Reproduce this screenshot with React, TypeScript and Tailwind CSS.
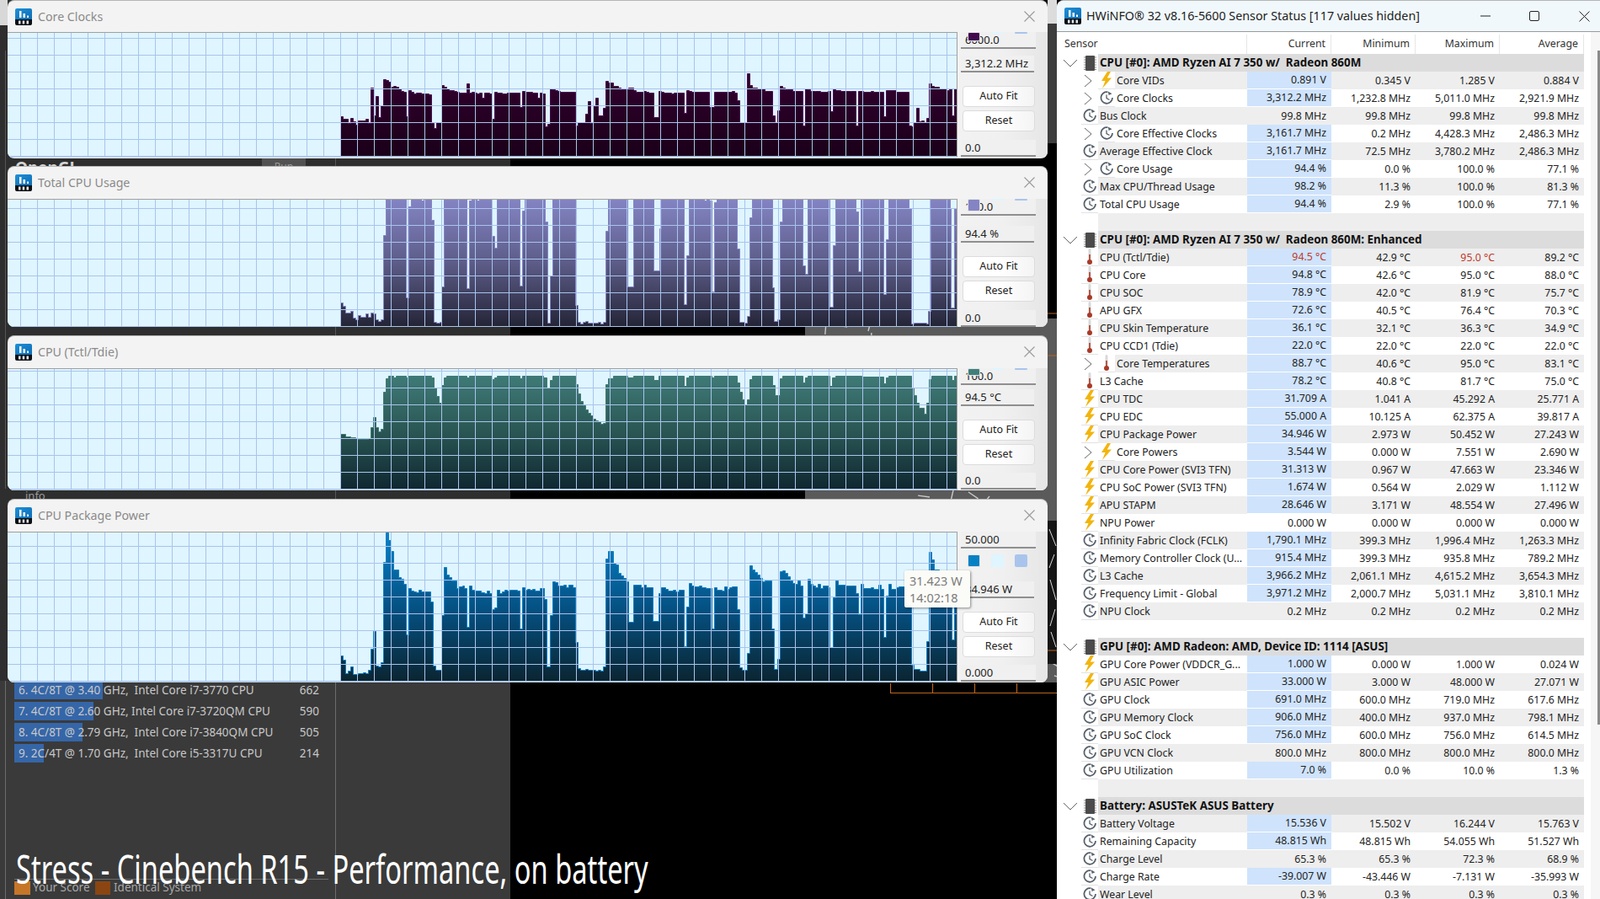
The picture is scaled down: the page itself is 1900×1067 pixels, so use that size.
const conv = (a: number[], ox: number, oy: number) => {
  const out: number[][] = [];
  for (let i = 0; i < a.length; i += 2) out.push([Math.round(ox + a[i] / 3), Math.round(oy + a[i + 1] / 3)]);
  return out;
};

const clockData = [
  ...conv([12,295,21,303,39,318,48,300,57,313,66,323,75,310,93,309,102,303,111,318,120,193,129,292,138,222,147,297,156,256,165,162,174,165,183,172,192,190,201,187,210,189,219,195,228,205,237,207,246,295,255,201,264,208,273,212,282,210,300,212,327,216,336,318,345,337,354,315,372,184,381,189,390,195,399,201,417,204,426,208,435,210,462,178,471,210,480,207,489,210,498,213,507,210,516,228,525,210,543,213,552,303,561,207,570,210,588,213,606,210,651,261,660,204,669,208,687,207,696,210,714,228,723,210,732,213,741,330,750,321,759,195,768,198,777,201,786,204,795,207,849,327,858,315,885,285,894,240,903,318,912,258,921,228,930,291,948,264,957,168,966,174,984,186,1002,192,1011,198,1038,192,1056,201,1065,207,1092,204,1101,207,1110,210,1128,297,1146,204,1155,208,1164,210,1191,213,1200,210,1236,282,1245,201,1254,204,1263,207,1326,261,1344,207,1407,204,1416,210,1425,237,1434,315], 400, 40),
  ...conv([22,262,31,304,40,312,58,316,85,323,112,412,121,436,130,392,139,306,148,313,157,318,184,323,193,325,220,447,229,316,238,318,247,325,265,323,283,326,310,324,319,396,328,319,337,320,355,323,391,325,409,447,418,325,436,326,463,324,472,327,508,413,517,322,553,327,598,447,607,450,616,436,625,385,634,432,643,429,652,436,661,420,670,298,679,305,688,310,706,315,733,320,742,316,751,410,760,316], 880, 0),
];
const usageData = [
  ...conv([12,505,21,517,30,541,48,535,57,559,66,565,75,550,84,556,102,544,111,556,120,541,129,544,138,565,147,571,156,565,165,265,174,136,246,487,255,162,264,136,300,140,309,136,336,210,345,574,354,577,366,574,372,448,381,136,462,454,471,140,480,136,498,140,507,136,552,268,561,310,570,136,651,445,660,178,669,136,741,216,750,577,759,409,768,136,849,514,858,574,867,580,876,574,885,571,894,577,930,574,939,580,948,574,957,250,966,136,1035,448,1056,136,1128,391,1149,241,1155,136,1236,511,1245,337,1254,136,1308,140,1317,136,1326,140,1335,466,1344,147,1353,136,1425,313,1434,574,1452,577,1461,553,1470,202], 400, 190),
  ...conv([39,706,110,1020,118,1140,130,1135,138,785,147,706,218,943,227,972,238,706,316,1090,328,870,337,706,408,750,417,963,426,706,506,1043,517,850,526,706,597,737,606,1150,615,1145,660,1150,667,1105,676,706,745,737,748,1092,760,737], 880, 0),
];
const tempData = [
  ...conv([12,283,30,292,48,294,66,297,75,300,111,298,120,259,129,223,138,259,147,273,156,265,165,133,174,85,183,76,201,82,210,76,246,82,255,76,336,82,345,118,354,148,363,172,372,109,381,82,390,76,462,82,471,76,552,88,561,82,570,76,651,85,660,76,735,82,747,118,759,91,768,76,849,106,858,139,867,166,876,181,885,196,894,208,903,217,912,229,921,235,930,238,939,247,948,244,957,106,966,85,984,76,1035,82,1056,76,1128,91,1147,76,1236,110,1245,82,1254,76,1335,82,1344,76,1425,100,1434,133,1443,160,1452,178,1461,160,1470,88], 400, 420),
  ...conv([39,135,112,168,121,205,139,145,148,135,220,160,229,142,238,135,316,172,325,142,337,135,430,137,508,162,517,140,526,135,607,178,616,205,625,230,634,250,652,270,661,232,670,148,679,135,751,150,760,135], 880, 400),
];
const powerData = [
  ...conv([12,1072,21,1086,30,1135,39,1126,48,1111,57,1138,75,1135,93,1132,102,1135,111,1123,120,1048,129,985,138,1108,147,1111,156,1096,165,739,174,632,183,661,192,700,201,766,219,793,228,799,237,817,246,997,255,832,264,841,273,844,282,847,291,838,300,844,333,880,342,1108,351,1123,372,928,381,757,390,784,399,793,408,805,426,832,435,826,447,823,453,832,462,970,471,823,480,838,489,841,513,847,525,850,534,841,543,850,552,907,561,901,570,838,579,850,588,844,597,838,606,841,615,838,642,841,651,975,660,829,669,838,678,835,687,838,696,835,705,841,723,832,738,870,747,1110,759,928,768,808,777,811,786,823,807,820,816,829,825,820,840,829,849,1024,858,1117,867,1123,885,1120,894,1123,921,1126,930,1123,939,1126,948,1110,957,727,966,700,984,742,993,748,1002,778,1011,787,1020,796,1029,808,1038,952,1056,820,1083,829,1092,820,1101,829,1125,948,1146,850,1155,829,1170,835,1179,841,1197,838,1206,844,1218,838,1236,1038,1245,898,1254,814,1263,823,1272,826,1290,823,1299,829,1314,832,1335,975,1344,829,1353,838,1371,841,1380,826,1389,835,1398,829,1407,826,1425,907,1434,1114,1443,1123,1461,1063], 400, 420),
  ...conv([31,811,40,826,49,835,58,844,67,856,76,868,85,865,100,865,109,1034,118,1180,130,1143,139,830,148,827,157,836,166,850,175,863,184,872,193,875,202,865,211,883,220,997,229,980,238,858,247,875,256,883,265,887,274,877,283,890,292,883,310,887,316,1102,328,925,337,865,346,878,355,880,373,883,391,881,408,910,417,985,427,877,436,890,463,887,472,893,490,880,499,893,508,1065,517,918,526,875,535,893,553,888,562,885,606,1165,616,1180,635,1185,661,1080,670,762,679,790,688,824,706,900,733,900,751,1075,760,900], 880, 400),
];

function AppIcon() {
  return (
    <svg width="20" height="20" viewBox="0 0 20 20" className="shrink-0">
      <defs>
        <linearGradient id="appblue" x1="0" y1="0" x2="1" y2="1">
          <stop offset="0" stopColor="#1e90d8" />
          <stop offset="1" stopColor="#0d6db5" />
        </linearGradient>
      </defs>
      <path d="M2 0H18A2 2 0 0 1 20 2V13H0V2A2 2 0 0 1 2 0Z" fill="url(#appblue)" />
      <path d="M0 13H20V18A2 2 0 0 1 18 20H2A2 2 0 0 1 0 18Z" fill="#0b0f14" />
      <path d="M5 3H7.5V11H5ZM9.5 6H12V11H9.5ZM14 8.5H16V11H14Z" fill="#fff" />
      <path d="M4 14.5H6.5V18.5H4ZM8.7 14.5H11.2V18.5H8.7ZM13.5 14.5H16V18.5H13.5Z" fill="#e6e6e6" />
    </svg>
  );
}

function Clock() {
  return (
    <svg width="18" height="18" viewBox="0 0 18 18" fill="none">
      <path d="M10.5 2.3A6.8 6.8 0 1 0 16 9" stroke="#56606a" strokeWidth="1.8" />
      <path d="M10.8 1.5L15.5 4.2L11.6 6Z" fill="#56606a" />
      <path d="M9 5.5V9.5L12.5 11.5" stroke="#56606a" strokeWidth="1.3" />
    </svg>
  );
}

function Bolt() {
  return (
    <svg width="14" height="20" viewBox="0 0 14 20">
      <path d="M8 0L1 11H5.5L2 20L13 7.5H7.8L12 0Z" fill="#f2b50f" />
    </svg>
  );
}

function Thermo() {
  return (
    <svg width="8" height="20" viewBox="0 0 8 20">
      <rect x="2.5" y="0" width="3" height="13" rx="1.5" fill="#d9d9d9" />
      <rect x="3.2" y="7" width="1.6" height="8" fill="#a83a28" />
      <circle cx="4" cy="16" r="3" fill="#a83a28" />
    </svg>
  );
}

function Chip() {
  return (
    <svg width="15" height="18" viewBox="0 0 15 18">
      <path d="M0 2H15M0 5H15M0 8H15M0 11H15M0 14H15M0 16.5H15" stroke="#8a8a8a" strokeWidth="1" />
      <rect x="2" y="0" width="11" height="18" rx="1" fill="#4b4b4b" />
    </svg>
  );
}

function Chevron({ down }: { down?: boolean }) {
  return down ? (
    <svg width="18" height="12" viewBox="0 0 18 12" fill="none">
      <path d="M1 2L9 10L17 2" stroke="#666" strokeWidth="1" />
    </svg>
  ) : (
    <svg width="10" height="16" viewBox="0 0 10 16" fill="none">
      <path d="M1 1L9 8L1 15" stroke="#666" strokeWidth="1" />
    </svg>
  );
}

type GraphProps = {
  height: number;
  bottomAbs: number;
  data: number[][];
  id: string;
  line: string;
  stops: string[];
};

function Graph({ height, bottomAbs, data, id, line, stops }: GraphProps) {
  const width = 1128;
  const top = bottomAbs - height;
  let d = `M${data[0][0] - 9 + 0.5} ${height}`;
  data.forEach(([x, y], i) => {
    const next = i + 1 < data.length ? data[i + 1][0] - 9 : width;
    d += `V${y - top + 0.5}H${next + 0.5}`;
  });
  d += `V${height}Z`;
  const hs: number[] = [];
  for (let y = height - 1.5; y > 1; y -= 20) hs.push(y);
  const vs: number[] = [];
  for (let x = 15.5; x < width; x += 20) vs.push(x);
  return (
    <svg width={width} height={height} viewBox={`0 0 ${width} ${height}`} className="block shrink-0">
      <defs>
        <linearGradient id={id} gradientUnits="userSpaceOnUse" x1="0" y1="0" x2="0" y2={height}>
          {stops.map((c, i) => (
            <stop key={i} offset={i / (stops.length - 1)} stopColor={c} />
          ))}
        </linearGradient>
      </defs>
      <rect width={width} height={height} fill="#dff5ff" />
      <path d={d} fill={`url(#${id})`} />
      <path d={d} fill="none" stroke={line} strokeWidth="1" />
      {hs.map((y) => (
        <path key={y} d={`M0 ${y}H${width}`} stroke="#a9c4ec" strokeWidth="1" />
      ))}
      {vs.map((x) => (
        <path key={x} d={`M${x} 0V${height}`} stroke="#a9c4ec" strokeWidth="1" />
      ))}
      <path d={`M0 0.5H${width}M${width - 0.5} 0V${height}`} stroke="#a0a0a0" strokeWidth="1" />
      <path d={`M0 ${height - 0.5}H${width}`} stroke="#bcd0e8" strokeWidth="1" />
    </svg>
  );
}

function Field({ text, className }: { text: string; className?: string }) {
  return (
    <div className={`h-[20px] border-b-2 border-[#8f8f8f] bg-[#f0f0f0] pl-[5px] pt-[2px] flex items-center text-[13px] text-[#222] font-['Open_Sans',sans-serif] ${className}`}>
      {text}
    </div>
  );
}

function PanelButton({ text }: { text: string }) {
  return (
    <div className="h-[25px] w-[86px] ml-[2px] rounded-[4px] border border-[#dcdcdc] bg-gradient-to-r from-white via-white to-[#f4f4f4] flex items-center justify-center text-[12.5px] text-[#222] font-['Open_Sans',sans-serif]">
      {text}
    </div>
  );
}

type WinProps = {
  title: string;
  topClass: string;
  heightClass: string;
  titleClass: string;
  graphH: number;
  bottomAbs: number;
  data: number[][];
  id: string;
  line: string;
  stops: string[];
  max: string;
  cur: string;
  min: string;
  fieldGap: string;
  swatchTop: string;
  swatchH: string;
  otherH: string;
  swatch: string;
};

function GraphWindow(p: WinProps) {
  return (
    <div className={`absolute left-[9px] w-[1235px] rounded-[8px] border-t border-[#b5b5b5] bg-[#f3f3f3] overflow-hidden ${p.topClass} ${p.heightClass}`}>
      <div className={`flex items-center pl-[9px] pr-[15px] ${p.titleClass}`}>
        <AppIcon />
        <span className="ml-[7px] text-[14.2px] text-[#8a8a8a] font-['Open_Sans',sans-serif]">{p.title}</span>
        <svg width="13" height="13" viewBox="0 0 13 13" className="ml-auto" fill="none">
          <path d="M0.5 0.5L12.5 12.5M12.5 0.5L0.5 12.5" stroke="#9a9a9a" strokeWidth="1.1" />
        </svg>
      </div>
      <div className="flex">
        <Graph height={p.graphH} bottomAbs={p.bottomAbs} data={p.data} id={p.id} line={p.line} stops={p.stops} />
        <div className="relative w-[107px] pl-[4px] pr-[14px] flex flex-col bg-gradient-to-r from-[#f2f2f2] via-[#f0f0f0] to-[#e6e6e6]" style={{ height: p.graphH }}>
          <Field text={p.max} className="w-[89px]" />
          <Field text={p.cur} className={`w-[87px] ${p.fieldGap}`} />
          <div className="mt-[16px] flex flex-col gap-[4px]">
            <PanelButton text="Auto Fit" />
            <PanelButton text="Reset" />
          </div>
          <Field text={p.min} className="w-[89px] mt-auto mb-[1px]" />
          <div className={`absolute left-[12px] flex gap-[13px] ${p.swatchTop}`}>
            <div className={`w-[15px] ${p.swatchH} ${p.swatch} rounded-[2px] border border-[#e4e4e4]`} />
            <div className={`w-[15px] ${p.otherH} bg-[#dff5ff] rounded-[2px]`} />
            <div className={`w-[15px] ${p.otherH} bg-[#a9c4ec] rounded-[2px]`} />
          </div>
        </div>
      </div>
    </div>
  );
}

type Row = {
  name?: string;
  kind?: "head" | "bolt" | "clock" | "temp";
  sub?: boolean;
  blue?: boolean;
  vals?: string[];
  hot?: boolean;
};

const r = (kind: Row["kind"], name: string, blue: boolean, vals: string, sub = false, hot = false): Row => ({
  kind,
  name,
  blue,
  vals: vals.split("|"),
  sub,
  hot,
});
const head = (name: string): Row => ({ kind: "head", name });

const rows: Row[] = [
  head("CPU [#0]: AMD Ryzen AI 7 350 w/  Radeon 860M"),
  r("bolt", "Core VIDs", true, "0.891 V|0.345 V|1.285 V|0.884 V", true),
  r("clock", "Core Clocks", true, "3,312.2 MHz|1,232.8 MHz|5,011.0 MHz|2,921.9 MHz", true),
  r("clock", "Bus Clock", false, "99.8 MHz|99.8 MHz|99.8 MHz|99.8 MHz"),
  r("clock", "Core Effective Clocks", true, "3,161.7 MHz|0.2 MHz|4,428.3 MHz|2,486.3 MHz", true),
  r("clock", "Average Effective Clock", true, "3,161.7 MHz|72.5 MHz|3,780.2 MHz|2,486.3 MHz"),
  r("clock", "Core Usage", true, "94.4 %|0.0 %|100.0 %|77.1 %", true),
  r("clock", "Max CPU/Thread Usage", true, "98.2 %|11.3 %|100.0 %|81.3 %"),
  r("clock", "Total CPU Usage", true, "94.4 %|2.9 %|100.0 %|77.1 %"),
  {},
  head("CPU [#0]: AMD Ryzen AI 7 350 w/  Radeon 860M: Enhanced"),
  r("temp", "CPU (Tctl/Tdie)", true, "94.5 °C|42.9 °C|95.0 °C|89.2 °C", false, true),
  r("temp", "CPU Core", true, "94.8 °C|42.6 °C|95.0 °C|88.0 °C"),
  r("temp", "CPU SOC", true, "78.9 °C|42.0 °C|81.9 °C|75.7 °C"),
  r("temp", "APU GFX", true, "72.6 °C|40.5 °C|76.4 °C|70.3 °C"),
  r("temp", "CPU Skin Temperature", true, "36.1 °C|32.1 °C|36.3 °C|34.9 °C"),
  r("temp", "CPU CCD1 (Tdie)", true, "22.0 °C|22.0 °C|22.0 °C|22.0 °C"),
  r("temp", "Core Temperatures", true, "88.7 °C|40.6 °C|95.0 °C|83.1 °C", true),
  r("temp", "L3 Cache", true, "78.2 °C|40.8 °C|81.7 °C|75.0 °C"),
  r("bolt", "CPU TDC", true, "31.709 A|1.041 A|45.292 A|25.771 A"),
  r("bolt", "CPU EDC", true, "55.000 A|10.125 A|62.375 A|39.817 A"),
  r("bolt", "CPU Package Power", true, "34.946 W|2.973 W|50.452 W|27.243 W"),
  r("bolt", "Core Powers", true, "3.544 W|0.000 W|7.551 W|2.690 W", true),
  r("bolt", "CPU Core Power (SVI3 TFN)", true, "31.313 W|0.967 W|47.663 W|23.346 W"),
  r("bolt", "CPU SoC Power (SVI3 TFN)", true, "1.674 W|0.564 W|2.029 W|1.112 W"),
  r("bolt", "APU STAPM", true, "28.646 W|3.171 W|48.554 W|27.496 W"),
  r("bolt", "NPU Power", false, "0.000 W|0.000 W|0.000 W|0.000 W"),
  r("clock", "Infinity Fabric Clock (FCLK)", true, "1,790.1 MHz|399.3 MHz|1,996.4 MHz|1,263.3 MHz"),
  r("clock", "Memory Controller Clock (U...", true, "915.4 MHz|399.3 MHz|935.8 MHz|789.2 MHz"),
  r("clock", "L3 Cache", true, "3,966.2 MHz|2,061.1 MHz|4,615.2 MHz|3,654.3 MHz"),
  r("clock", "Frequency Limit - Global", true, "3,971.2 MHz|2,000.7 MHz|5,031.1 MHz|3,810.1 MHz"),
  r("clock", "NPU Clock", false, "0.2 MHz|0.2 MHz|0.2 MHz|0.2 MHz"),
  {},
  head("GPU [#0]: AMD Radeon: AMD, Device ID: 1114 [ASUS]"),
  r("bolt", "GPU Core Power (VDDCR_G...", true, "1.000 W|0.000 W|1.000 W|0.024 W"),
  r("bolt", "GPU ASIC Power", true, "33.000 W|3.000 W|48.000 W|27.071 W"),
  r("clock", "GPU Clock", true, "691.0 MHz|600.0 MHz|719.0 MHz|617.6 MHz"),
  r("clock", "GPU Memory Clock", true, "906.0 MHz|400.0 MHz|937.0 MHz|798.1 MHz"),
  r("clock", "GPU SoC Clock", true, "756.0 MHz|600.0 MHz|756.0 MHz|614.5 MHz"),
  r("clock", "GPU VCN Clock", false, "800.0 MHz|800.0 MHz|800.0 MHz|800.0 MHz"),
  r("clock", "GPU Utilization", true, "7.0 %|0.0 %|10.0 %|1.3 %"),
  {},
  head("Battery: ASUSTeK ASUS Battery"),
  r("clock", "Battery Voltage", true, "15.536 V|15.502 V|16.244 V|15.763 V"),
  r("clock", "Remaining Capacity", true, "48.815 Wh|48.815 Wh|54.055 Wh|51.527 Wh"),
  r("clock", "Charge Level", false, "65.3 %|65.3 %|72.3 %|68.9 %"),
  r("clock", "Charge Rate", true, "-39.007 W|-43.446 W|-7.131 W|-35.993 W"),
  r("clock", "Wear Level", false, "0.3 %|0.3 %|0.3 %|0.3 %"),
];

function RowIcon({ kind }: { kind: Row["kind"] }) {
  return kind === "bolt" ? <Bolt /> : kind === "temp" ? <Thermo /> : <Clock />;
}

function SensorRow({ row, index }: { row: Row; index: number }) {
  const shade = index % 2 === 1 ? "bg-[#eeeeee]" : "bg-white";
  if (row.kind === "head") {
    return (
      <div className="flex h-[21px] items-center">
        <div className="w-[29px] pl-[7px] flex items-center"><Chevron down /></div>
        <div className="w-[20px] flex items-center justify-center"><Chip /></div>
        <div className="flex-1 h-full bg-[#dcdcdc] pl-[2px] flex items-center whitespace-pre [font-family:'DejaVu_Sans',sans-serif] font-bold text-[13.4px] text-[#111]">
          {row.name}
        </div>
      </div>
    );
  }
  if (!row.name) {
    return (
      <div className="flex h-[21px]">
        <div className="w-[49px]" />
        <div className={`flex-1 ${shade}`} />
      </div>
    );
  }
  return (
    <div className="flex h-[21px] text-[#222]">
      <div className="w-[29px]" />
      {row.sub && (
        <div className="w-[20px] flex items-center pl-[3px]"><Chevron /></div>
      )}
      <div className="w-[20px] flex items-center justify-center border-b border-[#e2e2e2]"><RowIcon kind={row.kind} /></div>
      <div className={`flex-1 min-w-0 pl-[2px] pt-[1px] flex items-center whitespace-pre ${shade}`}>{row.name}</div>
      {row.vals?.map((v, i) => (
        <div
          key={i}
          className={`w-[100px] pr-[6px] pt-[1px] flex items-center justify-end ${i === 0 && row.blue ? "bg-[#cfe3fc] border-b border-white" : shade} ${row.hot && i !== 1 && i !== 3 ? "text-[#c0392b]" : ""}`}
        >
          {v}
        </div>
      ))}
    </div>
  );
}

const cinebench = [
  { rank: "6. 4C/8T @ 3.40 GHz,  Intel Core i7-3770 CPU", score: "662", bar: "w-[105px]" },
  { rank: "7. 4C/8T @ 2.60 GHz, Intel Core i7-3720QM CPU", score: "590", bar: "w-[94px]" },
  { rank: "8. 4C/8T @ 2.79 GHz,  Intel Core i7-3840QM CPU", score: "505", bar: "w-[81px]" },
  { rank: "9. 2C/4T @ 1.70 GHz,  Intel Core i5-3317U CPU", score: "214", bar: "w-[35px]" },
];

function Texture() {
  const lines: string[] = [];
  for (let i = 0; i < 90; i++) {
    const x = (i * 37) % 300;
    const y = (i * 53) % 440;
    const a = (i * 47) % 360;
    const dx = Math.cos((a * Math.PI) / 180) * 14;
    const dy = Math.sin((a * Math.PI) / 180) * 14;
    lines.push(`M${x} ${y}l${dx.toFixed(1)} ${dy.toFixed(1)}`);
  }
  return (
    <svg width="299" height="432" viewBox="0 0 299 432" className="absolute left-[956px] top-[378px]">
      <rect width="299" height="432" fill="#5a5a5a" />
      <path d={lines.join("")} stroke="#c9c9c9" strokeWidth="1.4" fill="none" />
      <rect x="288" y="240" width="11" height="170" fill="#151515" />
      <path d="M290 250l8 20M296 280l-6 16M291 310l7 24M297 345l-6 20M292 372l6 18" stroke="#d8d8d8" strokeWidth="1" />
    </svg>
  );
}

export default function App() {
  return (
    <div className="relative w-[1900px] h-[1067px] overflow-hidden bg-black font-['Open_Sans',sans-serif]">
      {/* desktop behind the windows */}
      <div className="absolute inset-y-0 left-0 w-[606px] flex flex-col">
        <div className="h-[808px] bg-[#2e2e2e]" />
        <div className="flex-1 bg-[#3a3a3a] flex pl-[6px]">
          <div className="w-[393px] border-l border-r border-[#6c6c6c] pl-[10px] flex flex-col">
            <div className="flex flex-col gap-[3px]">
              {cinebench.map((c) => (
                <div key={c.score} className="relative h-[22px] w-[362px] flex items-center">
                  <div className={`absolute inset-y-0 left-0 bg-[#3566a8] ${c.bar}`} />
                  <span className="relative ml-[5px] text-[13.5px] whitespace-pre text-[#c8c8c8] font-['Open_Sans',sans-serif]">{c.rank}</span>
                  <span className="relative ml-auto text-[13.5px] text-[#c8c8c8]">{c.score}</span>
                </div>
              ))}
            </div>
            <div className="mt-auto mb-[23px] w-[373px] h-[1px] bg-[#6c6c6c]" />
          </div>
        </div>
      </div>
      <div className="absolute left-[1244px] top-0 w-[11px] h-[28px] bg-[#dcdcdc]" />
      <div className="absolute left-[1244px] top-[28px] w-[11px] h-[142px] bg-[#3d3d3d]" />
      <div className="absolute left-0 top-0 w-[9px] h-[30px] bg-[#d8d8d8]" />
      <div className="absolute left-[6px] top-[60px] h-[520px] w-[1px] bg-[#555]" />
      <div className="absolute left-[398px] top-[188px] h-[404px] w-[1px] bg-[#555]" />
      <Texture />
      <div className="absolute left-[18px] top-[187px] text-[19px] font-bold text-[#d4d4d4] leading-[24px]">OpenGL</div>
      <div className="absolute left-[311px] top-[188px] h-[10px] w-[52px] bg-[#525252] text-center text-[12px] leading-[20px] text-[#9a9a9a] overflow-hidden">Run</div>
      <div className="absolute left-[30px] top-[579px] text-[13px] text-[#9a9a9a]">info</div>
      <svg width="198" height="12" viewBox="0 0 198 12" className="absolute left-[1057px] top-[811px]" fill="none">
        <path d="M0.5 0V11.5H198M50.5 0V11M100.5 0V11M150.5 0V11" stroke="#b8651b" strokeWidth="1.2" />
      </svg>
      <svg width="11" height="402" viewBox="0 0 11 402" className="absolute left-[1244px] top-[371px]" fill="none">
        <path d="M0 1H11M0 51H11M0 401H11" stroke="#b8651b" strokeWidth="1.2" />
      </svg>

      {/* legend and caption */}
      <div className="absolute left-[17px] top-[1045px] flex items-center text-[13.5px] text-[#a8a8a8] leading-[17px]">
        <div className="w-[19px] h-[16px] bg-[#c67628]" />
        <span className="ml-[3px] w-[74px] whitespace-pre">Your Score</span>
        <div className="w-[18px] h-[16px] bg-[#8a4512]" />
        <span className="ml-[4px] whitespace-pre">Identical System</span>
      </div>
      <div className="absolute left-[19px] top-[1001px] origin-left scale-x-[0.68] text-[48px] leading-[60px] text-white whitespace-pre font-['Roboto',sans-serif]">
        Stress - Cinebench R15 - Performance, on battery
      </div>

      <GraphWindow
        title="Core Clocks"
        topClass="top-0"
        heightClass="h-[188px]"
        titleClass="h-[37px]"
        graphH={149}
        bottomAbs={187}
        data={clockData}
        id="g1"
        line="#4a0a52"
        stops={["#3a0032", "#2c0029", "#1a0019"]}
        max="6000.0"
        cur="3,312.2 MHz"
        min="0.0"
        fieldGap="mt-[8px]"
        swatchTop="top-0"
        swatchH="h-[11px]"
        otherH="h-[2px]"
        swatch="bg-[#41084e]"
      />
      <GraphWindow
        title="Total CPU Usage"
        topClass="top-[197px]"
        heightClass="h-[191px]"
        titleClass="h-[37px] mb-[1px]"
        graphH={153}
        bottomAbs={388}
        data={usageData}
        id="g2"
        line="#8585c6"
        stops={["#8484c4", "#5c5c88", "#232335"]}
        max="100.0"
        cur="94.4 %"
        min="0.0"
        fieldGap="mt-[12px]"
        swatchTop="top-0"
        swatchH="h-[15px]"
        otherH="h-[2px]"
        swatch="bg-[#8484c4]"
      />
      <GraphWindow
        title="CPU (Tctl/Tdie)"
        topClass="top-[398px]"
        heightClass="h-[184px]"
        titleClass="h-[37px] mb-[1px]"
        graphH={145}
        bottomAbs={581}
        data={tempData}
        id="g3"
        line="#3d7a76"
        stops={["#427f7c", "#2b5855", "#0f2630"]}
        max="100.0"
        cur="94.5 °C"
        min="0.0"
        fieldGap="mt-[5px]"
        swatchTop="top-0"
        swatchH="h-[9px]"
        otherH="h-[2px]"
        swatch="bg-[#417f7c]"
      />
      <GraphWindow
        title="CPU Package Power"
        topClass="top-[592px]"
        heightClass="h-[218px]"
        titleClass="h-[37px] mb-[1px]"
        graphH={179}
        bottomAbs={809}
        data={powerData}
        id="g4"
        line="#0a7fc4"
        stops={["#0682c8", "#045284", "#0b2430"]}
        max="50.000"
        cur="34.946 W"
        min="0.000"
        fieldGap="mt-[39px]"
        swatchTop="top-[27px]"
        swatchH="h-[15px]"
        otherH="h-[15px]"
        swatch="bg-[#0680c4]"
      />
      <div className="absolute left-[1074px] top-[677px] w-[78px] h-[44px] rounded-[2px] bg-[#fbfbf7] shadow-[1px_1px_3px_rgba(0,0,0,0.45)] pl-[6px] py-[2px] text-[14.5px] leading-[20px] text-[#7c7c7c] font-['Open_Sans',sans-serif]">
        <div>31.423 W</div>
        <div>14:02:18</div>
      </div>

      {/* sensor window */}
      <div className="absolute left-[1255px] top-0 w-[645px] h-[1067px] rounded-tl-[8px] border-t border-[#b5b5b5] bg-white flex flex-col overflow-hidden">
        <div className="h-[37px] shrink-0 bg-[#f1f8fc] flex items-center pl-[9px] border-b border-[#9a9a9a]">
          <AppIcon />
          <span className="ml-[6px] text-[14.3px] whitespace-pre text-[#222] font-['Open_Sans',sans-serif]">HWiNFO® 32 v8.16-5600 Sensor Status [117 values hidden]</span>
          <svg width="12" height="2" viewBox="0 0 12 2" className="ml-auto mr-[46px]"><path d="M0 1H12" stroke="#222" strokeWidth="1" /></svg>
          <svg width="12" height="12" viewBox="0 0 12 12" className="mr-[47px]" fill="none"><rect x="0.5" y="0.5" width="11" height="11" rx="1.5" stroke="#222" /></svg>
          <svg width="13" height="13" viewBox="0 0 13 13" className="mr-[12px]" fill="none"><path d="M0.5 0.5L12.5 12.5M12.5 0.5L0.5 12.5" stroke="#222" strokeWidth="1" /></svg>
        </div>
        <div className="relative flex-1 font-['Noto_Sans',sans-serif] text-[12.3px] leading-none overflow-hidden">
          <div className="flex h-[26px] w-[626px] items-center pt-[3px] text-[#333]">
            <div className="w-[226px] pl-[9px] h-full flex items-center border-r border-[#e6e6e6]">Sensor</div>
            {["Current", "Minimum", "Maximum", "Average"].map((h) => (
              <div key={h} className="w-[100px] h-full pr-[6px] flex items-center justify-end border-r border-[#e6e6e6]">{h}</div>
            ))}
          </div>
          <div className="w-[626px]">
            {rows.map((row, i) => (
              <SensorRow key={i} row={row} index={i} />
            ))}
          </div>
          <div className="absolute right-0 top-0 bottom-0 w-[11px] bg-[#f6f6f6]">
            <div className="absolute right-0 top-[22px] w-[3px] h-[800px] bg-[#8a8a8a]" />
          </div>
        </div>
      </div>
    </div>
  );
}
